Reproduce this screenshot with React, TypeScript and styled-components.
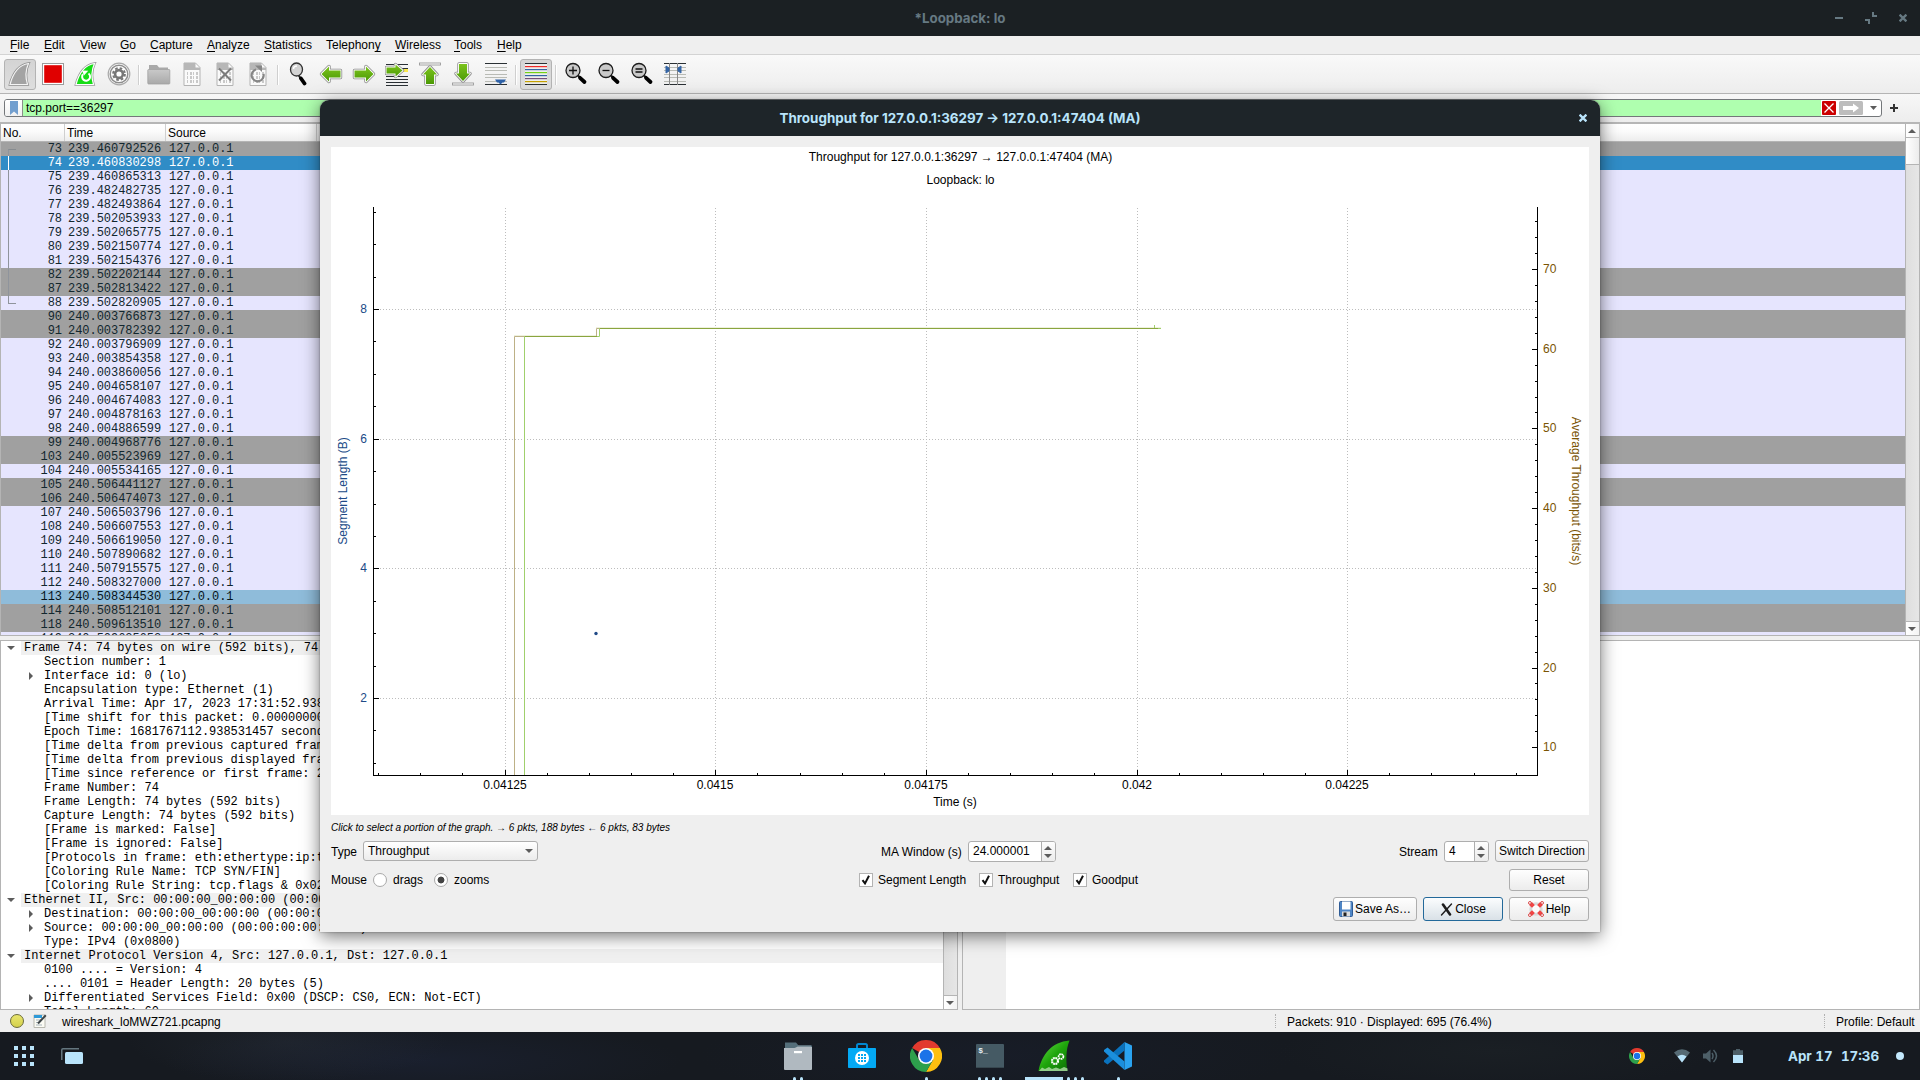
import React from 'react';
import styled, { createGlobalStyle, css } from 'styled-components';

const SANS = '"Liberation Sans", Arial, sans-serif';
const MONO = '"Liberation Mono", "Courier New", monospace';
const INTER = 'Inter, Roboto, sans-serif';

const Global = createGlobalStyle`
  html, body { margin: 0; padding: 0; background: #15191f; overflow: hidden; }
  *, *::before, *::after { box-sizing: border-box; }
  svg { display: block; flex: none; }
`;

const Screen = styled.div`
  position: relative;
  display: flex;
  flex-direction: column;
  width: 1920px;
  height: 1080px;
  overflow: hidden;
  background: #efefef;
  font: 12px/14px ${SANS};
  color: #000;
`;

/* ---------- main window frame ---------- */
const TitleBar = styled.header`
  flex: none;
  display: grid;
  grid-template-columns: 1fr auto 1fr;
  align-items: center;
  height: 36px;
  background: #1b2023;
  color: #667982;
  font: 700 13.33px/16px ${INTER};
`;
const TitleText = styled.span`
  grid-column: 2;
  white-space: pre;
`;
const WindowControls = styled.div`
  justify-self: end;
  display: flex;
  align-items: center;
  gap: 22px;
  padding-right: 13px;
`;

const MenuBar = styled.nav`
  flex: none;
  display: flex;
  height: 19px;
  padding: 2px 0 0 3px;
  border-bottom: 1px solid #d3d3d3;
`;
const MenuItem = styled.span<{ $w: number }>`
  flex: none;
  width: ${(p) => p.$w}px;
  padding-left: 7px;
  white-space: nowrap;
  u { text-underline-offset: 2px; text-decoration-thickness: 1px; }
`;

const ToolBar = styled.div`
  flex: none;
  display: flex;
  align-items: flex-start;
  gap: 1px;
  height: 39px;
  padding: 4px 0 0 4px;
  background: linear-gradient(#f9f9f9, #ededed);
  border-bottom: 1px solid #b4b4b4;
`;
const ToolButton = styled.span<{ $on?: boolean }>`
  flex: none;
  display: flex;
  justify-content: center;
  width: 32px;
  height: 31px;
  padding-top: ${(p) => (p.$on ? 2 : 3)}px;
  border-radius: 3px;
  ${(p) => p.$on && css`
    background: linear-gradient(#d4d4d4, #dedede);
    border: 1px solid #b3b3b3;
  `}
`;
const ToolSep = styled.span`
  width: 6px;
  height: 20px;
  border-left: 1px solid #cfcfcf;
  margin: 6px -2px 0 2px;
  box-shadow: inset 1px 0 #fff;
`;

const FilterBar = styled.div`
  flex: none;
  display: flex;
  align-items: flex-start;
  height: 30px;
  padding: 5px 0 0 4px;
  background: linear-gradient(#f7f7f7, #ededed);
  border-bottom: 2px solid #b6b6b6;
`;
const FilterBox = styled.div`
  display: flex;
  width: 1878px;
  height: 18px;
  border: 1px solid #74777a;
  border-radius: 3px;
  background: #fff;
  overflow: hidden;
`;
const FilterBookmark = styled.span`
  display: flex;
  justify-content: center;
  align-items: center;
  width: 18px;
  border-right: 1px solid #8a8f8a;
  background: linear-gradient(#fff, #f1f1f1);
`;
const FilterText = styled.span`
  flex: 1;
  padding: 0 0 0 3px;
  line-height: 16px;
  background: #afffaf;
`;
const FilterTools = styled.span`
  display: flex;
  align-items: center;
  width: 60px;
  padding-left: 1px;
  gap: 3px;
`;
const FilterAdd = styled.span`
  display: flex;
  align-items: center;
  height: 18px;
  margin-left: 8px;
`;

/* ---------- packet list ---------- */
const PacketPane = styled.section`
  flex: none;
  display: flex;
  height: 512px;
  border: solid #b4b4b4;
  border-width: 0 1px 1px;
`;
const PacketTable = styled.div`
  flex: 1;
  display: flex;
  flex-direction: column;
  overflow: hidden;
`;
const HeaderRow = styled.div`
  flex: none;
  display: flex;
  height: 18px;
  background: linear-gradient(#fff, #fbfbfb 45%, #ededed);
  border-bottom: 1px solid #b4b4b4;
`;
const HeaderCell = styled.span<{ $w: number }>`
  flex: none;
  width: ${(p) => p.$w}px;
  padding: 2px 0 0 2px;
  border-right: 1px solid #cfcfcf;
`;

type Kind = 'gray' | 'tcp' | 'sel' | 'rel';
const rowColors: Record<Kind, [string, string]> = {
  gray: ['#a0a0a0', '#12272e'],
  tcp: ['#e6e5fe', '#12272e'],
  sel: ['#308cc6', '#ffffff'],
  rel: ['#8fbcda', '#06141a'],
};
const PacketRow = styled.div<{ $kind: Kind }>`
  flex: none;
  display: grid;
  grid-template-columns: 15px 46px 101px auto;
  height: 14px;
  font: 12px/14px ${MONO};
  letter-spacing: -0.04px;
  background: ${(p) => rowColors[p.$kind][0]};
  color: ${(p) => rowColors[p.$kind][1]};
`;
const Thread = styled.span<{ $part?: 'start' | 'mid' | 'end'; $light?: boolean }>`
  width: 8px;
  margin-left: 7px;
  ${(p) => p.$part && css`border-left: 1px solid ${p.$light ? '#fff' : '#8f949c'};`}
  ${(p) => p.$part === 'start' && css`height: 7px; margin-top: 7px; border-top: 1px solid #878c90;`}
  ${(p) => p.$part === 'end' && css`height: 8px; border-bottom: 1px solid #8f949c;`}
`;
const NoCell = styled.span`
  text-align: right;
`;
const Cell = styled.span`
  padding-left: 6px;
`;

const ScrollBar = styled.div`
  flex: none;
  display: flex;
  flex-direction: column;
  width: 14px;
  border-left: 1px solid #b4b4b4;
  background: linear-gradient(90deg, #dedede, #e6e6e6);
`;
const ScrollButton = styled.span<{ $bottom?: boolean }>`
  display: flex;
  align-items: center;
  justify-content: center;
  height: 14px;
  padding-right: 1px;
  background: linear-gradient(90deg, #fff, #f3f3f3);
  ${(p) => (p.$bottom ? css`margin-top: auto; border-top: 1px solid #b4b4b4;` : css`border-bottom: 1px solid #b4b4b4;`)}
`;
const ScrollHandle = styled.span`
  height: 27px;
  border-bottom: 1px solid #b4b4b4;
  background: linear-gradient(90deg, #fff, #ececec);
`;

/* ---------- lower panes ---------- */
const LowerPanes = styled.section`
  flex: none;
  display: flex;
  gap: 4px;
  height: 370px;
  margin-top: 4px;
`;
const DetailPane = styled.div`
  display: flex;
  width: 958px;
  border: 1px solid #b4b4b4;
  background: #fff;
`;
const DetailTree = styled.div`
  flex: 1;
  overflow: hidden;
`;
const DetailRow = styled.div<{ $top?: boolean }>`
  display: flex;
  height: 14px;
  font: 12px/14px ${MONO};
  letter-spacing: -0.025px;
  white-space: pre;
  padding-left: ${(p) => (p.$top ? 0 : 20)}px;
`;
const Expander = styled.span`
  flex: none;
  display: flex;
  align-items: center;
  justify-content: center;
  width: 20px;
`;
const DetailText = styled.span<{ $top?: boolean }>`
  flex: 1;
  padding-left: 3px;
  background: ${(p) => (p.$top ? '#f0f0f0' : 'transparent')};
`;
const HexPane = styled.div`
  flex: 1;
  border: 1px solid #b4b4b4;
  background: linear-gradient(90deg, #efefef 43px, #fff 43px);
`;

const StatusBar = styled.footer`
  flex: none;
  display: flex;
  align-items: center;
  height: 22px;
`;
const ExpertDot = styled.span`
  width: 14px;
  height: 14px;
  margin-left: 10px;
  border: 1px solid #6b6b3a;
  border-radius: 50%;
  background: linear-gradient(#e9e66f, #d3d04d);
`;
const StatusFile = styled.span`
  flex: none;
  width: 1213px;
  padding-top: 2px;
  padding-left: 15px;
`;
const StatusGrip = styled.span`
  flex: none;
  width: 1px;
  height: 14px;
  border-left: 1px dotted #b0b0b0;
`;
const StatusCell = styled.span<{ $w?: number }>`
  flex: none;
  padding-top: 2px;
  padding-left: 11px;
  white-space: nowrap;
  ${(p) => p.$w && css`width: ${p.$w}px;`}
`;

/* ---------- dock ---------- */
const Dock = styled.div`
  flex: none;
  display: grid;
  grid-template-columns: 782px auto 1fr;
  height: 48px;
  background:
    radial-gradient(ellipse 160px 40px at 15% 20%, rgba(70, 80, 95, 0.16), transparent),
    radial-gradient(ellipse 260px 40px at 22% 60%, rgba(30, 38, 62, 0.45), transparent),
    radial-gradient(ellipse 300px 50px at 52% 50%, rgba(26, 32, 50, 0.4), transparent),
    radial-gradient(ellipse 220px 40px at 78% 40%, rgba(30, 36, 40, 0.5), transparent),
    #161a20;
`;
const DockLeft = styled.div`
  display: flex;
  align-items: center;
  gap: 27px;
  padding-left: 14px;
`;
const DockApps = styled.div`
  display: flex;
  gap: 32px;
`;
const DockApp = styled.div`
  display: flex;
  flex-direction: column;
  align-items: center;
  width: 32px;
  height: 48px;
  padding-top: 8px;
`;
const Marks = styled.span`
  display: flex;
  gap: 4px;
  height: 3px;
  margin-top: auto;
`;
const Mark = styled.i<{ $w?: number }>`
  width: ${(p) => p.$w ?? 3}px;
  height: 3px;
  flex: none;
  border-radius: ${(p) => (p.$w ? 0 : '1.5px 1.5px 0 0')};
  background: #b9e4fb;
`;
const Tray = styled.div`
  display: flex;
  align-items: center;
  justify-content: flex-end;
  padding-right: 16px;
  color: #b9e4fb;
`;
const TrayItem = styled.span<{ $gap: number }>`
  display: flex;
  margin-right: ${(p) => p.$gap}px;
`;
const Clock = styled.span`
  display: flex;
  justify-content: space-between;
  width: 91px;
  margin: -1px 17px 0 0;
  font: 700 13.33px/16px ${INTER};
  font-variant-numeric: tabular-nums;
  white-space: nowrap;
`;
const TrayDot = styled.span`
  width: 8px;
  height: 8px;
  border-radius: 50%;
  background: #c3e8fc;
`;

/* ---------- dialog ---------- */
const Dialog = styled.div`
  position: absolute;
  left: 320px;
  top: 100px;
  display: flex;
  flex-direction: column;
  width: 1280px;
  height: 832px;
  border-radius: 9px 9px 0 0;
  background: #efefef;
  box-shadow: 0 4px 18px rgba(0, 0, 0, 0.55), 0 0 2px rgba(0, 0, 0, 0.4);
`;
const DialogTitle = styled.div`
  flex: none;
  display: grid;
  grid-template-columns: 1fr auto 1fr;
  align-items: center;
  height: 36px;
  border-radius: 9px 9px 0 0;
  background: #1e2529;
  color: #b9e4fb;
  font: 700 13.4px/16px ${INTER};
`;
const DialogClose = styled.span`
  justify-self: end;
  padding-right: 13px;
`;
const Plot = styled.div`
  flex: none;
  margin: 11px 11px 0;
  width: 1258px;
  height: 668px;
  background: #fff;
`;
const Hint = styled.div`
  height: 25px;
  padding: 6px 11px 0;
  font: italic 10px/14px ${SANS};
`;
const FormRow = styled.div<{ $h: number }>`
  flex: none;
  display: flex;
  align-items: center;
  height: ${(p) => p.$h}px;
  padding: 0 11px;
`;
const Label = styled.span<{ $w: number; $low?: boolean }>`
  flex: none;
  width: ${(p) => p.$w}px;
  padding-top: ${(p) => (p.$low ? 2 : 0)}px;
  white-space: nowrap;
`;
const Spacer = styled.span<{ $w?: number }>`
  ${(p) => (p.$w ? css`flex: none; width: ${p.$w}px;` : css`flex: 1;`)}
`;
const control = css`
  flex: none;
  border: 1px solid #aeaeae;
  border-radius: 3px;
`;
const Combo = styled.span`
  ${control}
  display: flex;
  align-items: center;
  justify-content: space-between;
  width: 175px;
  height: 20px;
  padding: 0 4px 1px 4px;
  background: linear-gradient(#fff, #ececec);
`;
const Spin = styled.span<{ $w: number }>`
  ${control}
  display: flex;
  width: ${(p) => p.$w}px;
  height: 21px;
  margin-top: 1px;
  background: #fff;
  overflow: hidden;
`;
const SpinValue = styled.span`
  flex: 1;
  padding-left: 4px;
  line-height: 19px;
`;
const SpinArrows = styled.span`
  display: flex;
  flex-direction: column;
  align-items: center;
  justify-content: center;
  gap: 4px;
  width: 14px;
  padding-right: 1px;
  border-left: 1px solid #aeaeae;
  background: linear-gradient(#fdfdfd, #ececec);
`;
const Button = styled.span<{ $w: number; $h: number; $primary?: boolean }>`
  ${control}
  display: flex;
  align-items: center;
  justify-content: center;
  gap: 2px;
  width: ${(p) => p.$w}px;
  height: ${(p) => p.$h}px;
  margin-left: 6px;
  white-space: nowrap;
  background: linear-gradient(#fefefe, #ececec);
  ${(p) => p.$primary && css`
    border-color: #23699a;
    background: linear-gradient(#fbfdfe, #d9e1e7);
  `}
`;
const Radio = styled.span<{ $on?: boolean }>`
  flex: none;
  width: 14px;
  height: 14px;
  border: 1px solid #a9a9a9;
  border-radius: 50%;
  background: ${(p) => (p.$on ? 'radial-gradient(circle, #434343 3px, #fff 3.8px)' : '#fff')};
`;
const CheckBox = styled.span`
  flex: none;
  display: flex;
  align-items: center;
  justify-content: center;
  width: 14px;
  height: 14px;
  margin-right: 5px;
  border: 1px solid #b3b3b3;
  background: #fff;
`;

/* ---------- small glyphs ---------- */
const Tri = ({ dir, w = 8, h = 5 }: { dir: 'up' | 'down' | 'right'; w?: number; h?: number }) => (
  <svg width={w} height={h} viewBox={`0 0 ${w} ${h}`} fill="#5c5c5c">
    {dir === 'up' && <path d={`M0 ${h}L${w / 2} 0L${w} ${h}Z`} />}
    {dir === 'down' && <path d={`M0 0H${w}L${w / 2} ${h}Z`} />}
    {dir === 'right' && <path d={`M0 0L${w} ${h / 2}L0 ${h}Z`} />}
  </svg>
);
const Cross = ({ color }: { color: string }) => (
  <svg width="8" height="8" viewBox="0 0 8 8" stroke={color} strokeWidth="2.3">
    <path d="M0.6 0.6L7.4 7.4M7.4 0.6L0.6 7.4" />
  </svg>
);
const Check = () => (
  <svg width="10" height="10" viewBox="0 0 10 10" fill="none" stroke="#111" strokeWidth="2">
    <path d="M1.5 5.2L4 8.4L8 0.8" />
  </svg>
);

/* ---------- toolbar icons, 24 unit grid ---------- */
const Icon = ({ children }: { children: React.ReactNode }) => (
  <svg width="24" height="24" viewBox="0 0 24 24" fill="none">{children}</svg>
);
const FIN = 'M2 22.5C5 11 11 3 20.5 1.5C17.5 8 17.5 16 19.5 22.5Z';
const Arrow = ({ d }: { d: string }) => (
  <g strokeLinejoin="round">
    <path d={d} stroke="#8b8b8b" strokeWidth="3.4" />
    <path d={d} stroke="#fff" strokeWidth="1.8" fill="url(#greenGrad)" />
    <path d={d} fill="url(#greenGrad)" />
  </g>
);
const Lines = ({ ys, color }: { ys: number[]; color: string }) => (
  <g fill={color}>{ys.map((y) => <rect key={y} x="1" y={y} width="22" height="1" />)}</g>
);
const Lens = ({ children }: { children?: React.ReactNode }) => (
  <Icon>
    <path d="M13.5 13L16 15.5" stroke="#222" strokeWidth="2" />
    <path d="M16 15.8L20.5 20" stroke="#000" strokeWidth="3.8" strokeLinecap="round" />
    <circle cx="9" cy="8.5" r="7" fill="#c9c9c9" stroke="#1c1c1c" strokeWidth="1.3" />
    {children}
  </Icon>
);
const FilePage = ({ children }: { children?: React.ReactNode }) => (
  <Icon>
    <path d="M4 1H15.5L20 5.5V23.5H4Z" fill="#fafafa" stroke="#b3b3b3" />
    <path d="M4 1H15.5V5.5H20V8H4Z" fill="#b7b7b7" />
    <g fill="#c9c9c9">
      {[10, 14, 18].map((y) => [7, 10, 13, 16].map((x, i) => (
        <rect key={`${x}-${y}`} x={x} y={y} width={(i + y / 2) % 2 ? 1 : 2} height="3" />
      )))}
    </g>
    {children}
  </Icon>
);

const FinIcon = () => (
  <Icon>
    <path d={FIN} fill="#a8a8a8" stroke="#8f8f8f" strokeWidth="2.6" />
    <path d={FIN} fill="#a3a3a3" stroke="#f4f4f4" strokeWidth="1.2" />
  </Icon>
);
const StopIcon = () => (
  <Icon>
    <rect x="1.5" y="1.5" width="21" height="21" fill="#fff" stroke="#9b9b9b" />
    <rect x="3.2" y="3.2" width="17.6" height="17.6" fill="#e00000" />
  </Icon>
);
const RestartIcon = () => (
  <Icon>
    <path d={FIN} fill="#fff" stroke="#9a9a9a" strokeWidth="2.6" />
    <path d={FIN} fill="#16dc16" stroke="#fff" strokeWidth="1.2" />
    <path d="M9 12.2A4 4 0 1 0 14.5 11.5" stroke="#fff" strokeWidth="2" />
    <path d="M8 8.5L14.2 8.7L10 13.5Z" fill="#fff" />
  </Icon>
);
const OptionsIcon = () => (
  <Icon>
    <circle cx="12" cy="12" r="10.8" fill="#fff" stroke="#a9a9a9" strokeWidth="1.2" />
    <circle cx="12" cy="12" r="8.8" fill="#fff" stroke="#8d8d8d" strokeWidth="1.5" />
    <circle cx="12" cy="12" r="5.9" stroke="#777" strokeWidth="2" strokeDasharray="2.6 2.03" />
    <circle cx="12" cy="12" r="3.9" stroke="#777" strokeWidth="2.6" />
  </Icon>
);
const FolderIcon = () => (
  <Icon>
    <path d="M2 3H10L12 5.5H21V9H2Z" fill="#a9a9a9" />
    <rect x="0.8" y="7.5" width="22" height="14.5" rx="0.8" fill="url(#folderGrad)" stroke="#a2a2a2" strokeWidth="0.8" />
  </Icon>
);
const ToolDefs = () => (
  <defs>
    <linearGradient id="greenGrad" x1="0" y1="0" x2="0" y2="1">
      <stop offset="0" stopColor="#7cc41c" /><stop offset="1" stopColor="#4c9a06" />
    </linearGradient>
    <linearGradient id="folderGrad" x1="0" y1="0" x2="0" y2="1">
      <stop offset="0" stopColor="#c9c9c9" /><stop offset="1" stopColor="#a9a9a9" />
    </linearGradient>
    <linearGradient id="finGrad" x1="0" y1="0" x2="1" y2="1">
      <stop offset="0" stopColor="#6be04a" /><stop offset="0.5" stopColor="#1fa50c" /><stop offset="1" stopColor="#0b6a05" />
    </linearGradient>
  </defs>
);

const tools: ({ icon: React.ReactNode; on?: boolean } | null)[] = [
  { icon: <FinIcon />, on: true },
  { icon: <StopIcon /> },
  { icon: <RestartIcon /> },
  { icon: <OptionsIcon /> },
  null,
  { icon: <FolderIcon /> },
  { icon: <FilePage /> },
  { icon: <FilePage><path d="M6 6.5L18 18.5M18 6.5L6 18.5" stroke="#7c7c7c" strokeWidth="2" /></FilePage> },
  { icon: <FilePage><path d="M10 7.5A6 6 0 1 0 17.5 12" stroke="#868686" strokeWidth="2.2" /><path d="M9 3.5H16V10Z" fill="#868686" /></FilePage> },
  null,
  {
    icon: (
      <Icon>
        <path d="M12.5 13L15 17" stroke="#222" strokeWidth="2" />
        <path d="M15 16.5L18.5 21.5" stroke="#000" strokeWidth="3.8" strokeLinecap="round" />
        <ellipse cx="10.5" cy="7.5" rx="6" ry="6.5" fill="#d3d3d3" stroke="#333" strokeWidth="1.3" />
        <path d="M7.5 7C7.5 5 9 4 11 4" stroke="#fff" strokeWidth="1.5" />
      </Icon>
    ),
  },
  { icon: <Icon><Arrow d="M2.5 12L10 4.5V8.5H21.5V15.5H10V19.5Z" /></Icon> },
  { icon: <Icon><Arrow d="M21.5 12L14 4.5V8.5H2.5V15.5H14V19.5Z" /></Icon> },
  {
    icon: (
      <Icon>
        <Lines ys={[2, 6, 14, 17, 20, 23]} color="#2a3034" />
        <rect x="17" y="7" width="6" height="3" fill="#fce94f" />
        <Arrow d="M17.5 8.5L10.5 2.5V5.5H1.5V11.5H10.5V14.5Z" />
      </Icon>
    ),
  },
  { icon: <Icon><rect x="1.5" y="1" width="21" height="2" fill="#fff" stroke="#9a9a9a" strokeWidth="0.9" /><Arrow d="M12 5L19 12.5H16V22H8V12.5H5Z" /></Icon> },
  { icon: <Icon><Arrow d="M12 19L19 11.5H16V2H8V11.5H5Z" /><rect x="1.5" y="21" width="21" height="2" fill="#fff" stroke="#9a9a9a" strokeWidth="0.9" /></Icon> },
  {
    icon: (
      <Icon>
        <Lines ys={[1, 22]} color="#2a3034" />
        <Lines ys={[5, 8, 12, 15, 19]} color="#b9bbb5" />
        <path d="M11 17.5H22L20 20.5H18.5L16.5 22.5L14.5 20.5H13Z" fill="#2f62a8" />
      </Icon>
    ),
  },
  null,
  {
    on: true,
    icon: (
      <Icon>
        <rect x="1" y="1" width="22" height="22" fill="#eeeeec" />
        <Lines ys={[1, 22]} color="#2a3034" />
        {[['#ef2929', 4], ['#3465a4', 7], ['#73d216', 10], ['#3465a4', 13], ['#75507b', 16], ['#c4a000', 19]].map(([c, y]) => (
          <rect key={y} x="1" y={y} width="22" height="1.2" fill={c as string} />
        ))}
      </Icon>
    ),
  },
  null,
  { icon: <Lens><path d="M5 8.5H13M9 4.5V12.5" stroke="#111" strokeWidth="1.3" /></Lens> },
  { icon: <Lens><path d="M5.5 8.5H12.5" stroke="#111" strokeWidth="1.3" /></Lens> },
  { icon: <Lens><path d="M5.5 7H12.5M5.5 10H12.5" stroke="#111" strokeWidth="1.3" /></Lens> },
  {
    icon: (
      <Icon>
        <Lines ys={[1, 22]} color="#2a3034" />
        <Lines ys={[5, 8, 12, 15, 19]} color="#b9bbb5" />
        <path d="M6.5 1V23M14.5 1V23" stroke="#888" />
        <path d="M3 4L6 6V9L3 11ZM18 4L15 6V9L18 11Z" fill="#3465a4" stroke="#3465a4" />
      </Icon>
    ),
  },
];

/* ---------- dock icons, drawn in 32px ---------- */
const Chrome = ({ size }: { size: number }) => (
  <svg width={size} height={size} viewBox="0 0 32 32">
    <path d="M16 16L2.14 8A16 16 0 0 1 29.86 8Z" fill="#e23a2e" />
    <path d="M16 8H29.86A16 16 0 0 1 16 32L22.93 20Z" fill="#fdbf10" />
    <path d="M2.14 8L9.07 20L16 24L22.93 20L16 32A16 16 0 0 1 2.14 8Z" fill="#2da04c" />
    <circle cx="16" cy="16" r="8" fill="#fff" />
    <circle cx="16" cy="16" r="6.4" fill="#1b73e8" />
  </svg>
);
const FilesIcon = () => (
  <svg width="32" height="32" viewBox="0 0 32 32">
    <path d="M3 2.5H14L16.5 5.5H30V12H3Z" fill="#546e7a" />
    <path d="M16 5.5H29V9H13Z" fill="#7b8f99" />
    <path d="M2 8H12.5L15 7H30V29Q30 30 29 30H3Q2 30 2 29Z" fill="#b0b9c0" />
    <rect x="12" y="11" width="8" height="2.2" fill="#fff" />
  </svg>
);
const StoreIcon = () => (
  <svg width="32" height="32" viewBox="0 0 32 32">
    <path d="M11 9V5.5Q11 4 12.5 4H19.5Q21 4 21 5.5V9" stroke="#0288d1" strokeWidth="2" fill="none" />
    <rect x="2" y="8" width="28" height="20" rx="0.8" fill="#03a9f4" />
    <circle cx="16" cy="18" r="7" fill="#fff" />
    <g fill="#03a9f4">
      {[12, 15, 18].map((x) => [14, 17, 20].map((y) => <rect key={`${x}${y}`} x={x} y={y} width="2" height="2" />))}
    </g>
  </svg>
);
const TermText = styled.text`
  font: 700 8px ${MONO};
  fill: #e6eef2;
`;
const TerminalIcon = () => (
  <svg width="32" height="32" viewBox="0 0 32 32">
    <rect x="2" y="4" width="28" height="24" rx="1" fill="#455a64" />
    <rect x="2" y="27" width="28" height="1" fill="#37474f" />
    <TermText x="4.3" y="13">$_</TermText>
  </svg>
);
const SharkIcon = () => (
  <svg width="32" height="32" viewBox="0 0 32 32">
    <path d="M0.5 31C4 14 14 2 31.5 0.5C27.5 10 28 22 29.5 31Z" fill="url(#finGrad)" />
    <path d="M1 31L4 27.5L7 29L11 27L14 29L18 27.5L22 29L26 27L29.5 28.5V31Z" fill="#a9d9a0" opacity="0.85" />
    <circle cx="17" cy="21" r="3" fill="none" stroke="#fff" strokeWidth="2.2" strokeDasharray="1.8 0.55" />
    <circle cx="23" cy="16.5" r="2.4" fill="none" stroke="#fff" strokeWidth="1.8" strokeDasharray="1.6 0.5" />
  </svg>
);
const CodeIcon = () => (
  <svg width="32" height="32" viewBox="0 0 32 32">
    <path d="M22.5 2L30 5.5V26.5L22.5 30Z" fill="#2aa3f0" />
    <path d="M22.5 2V10.5L5.5 24.5L2 22V20.5Z" fill="#0a72bd" />
    <path d="M22.5 30V21.5L5.5 7.5L2 10V11.5Z" fill="#1b8fdd" />
  </svg>
);

/* ---------- packet data ---------- */
const grays = [73, 82, 87, 90, 91, 99, 103, 105, 106, 114, 118];
const packets: [number, string][] = [
  [73, '239.460792526'], [74, '239.460830298'], [75, '239.460865313'], [76, '239.482482735'],
  [77, '239.482493864'], [78, '239.502053933'], [79, '239.502065775'], [80, '239.502150774'],
  [81, '239.502154376'], [82, '239.502202144'], [87, '239.502813422'], [88, '239.502820905'],
  [90, '240.003766873'], [91, '240.003782392'], [92, '240.003796909'], [93, '240.003854358'],
  [94, '240.003860056'], [95, '240.004658107'], [96, '240.004674083'], [97, '240.004878163'],
  [98, '240.004886599'], [99, '240.004968776'], [103, '240.005523969'], [104, '240.005534165'],
  [105, '240.506441127'], [106, '240.506474073'], [107, '240.506503796'], [108, '240.506607553'],
  [109, '240.506619050'], [110, '240.507890682'], [111, '240.507915575'], [112, '240.508327000'],
  [113, '240.508344530'], [114, '240.508512101'], [118, '240.509613510'], [119, '240.509625652'],
];
const kindOf = (no: number): Kind =>
  no === 74 ? 'sel' : no === 113 ? 'rel' : grays.includes(no) ? 'gray' : 'tcp';
const partOf = (no: number) =>
  no === 73 ? 'start' : no === 88 ? 'end' : no < 88 ? 'mid' : undefined;

/* level 0 rows are protocol headings; '+' marks a collapsed child */
const details: [number, string, string][] = [
  [0, '-', 'Frame 74: 74 bytes on wire (592 bits), 74 bytes'],
  [1, '', 'Section number: 1'],
  [1, '+', 'Interface id: 0 (lo)'],
  [1, '', 'Encapsulation type: Ethernet (1)'],
  [1, '', 'Arrival Time: Apr 17, 2023 17:31:52.938531457'],
  [1, '', '[Time shift for this packet: 0.000000000 seconds]'],
  [1, '', 'Epoch Time: 1681767112.938531457 seconds'],
  [1, '', '[Time delta from previous captured frame:'],
  [1, '', '[Time delta from previous displayed frame:'],
  [1, '', '[Time since reference or first frame: 239'],
  [1, '', 'Frame Number: 74'],
  [1, '', 'Frame Length: 74 bytes (592 bits)'],
  [1, '', 'Capture Length: 74 bytes (592 bits)'],
  [1, '', '[Frame is marked: False]'],
  [1, '', '[Frame is ignored: False]'],
  [1, '', '[Protocols in frame: eth:ethertype:ip:tcp]'],
  [1, '', '[Coloring Rule Name: TCP SYN/FIN]'],
  [1, '', '[Coloring Rule String: tcp.flags & 0x02]'],
  [0, '-', 'Ethernet II, Src: 00:00:00_00:00:00 (00:00:00)'],
  [1, '+', 'Destination: 00:00:00_00:00:00 (00:00:00:00:00:00)'],
  [1, '+', 'Source: 00:00:00_00:00:00 (00:00:00:00:00:00)'],
  [1, '', 'Type: IPv4 (0x0800)'],
  [0, '-', 'Internet Protocol Version 4, Src: 127.0.0.1, Dst: 127.0.0.1'],
  [1, '', '0100 .... = Version: 4'],
  [1, '', '.... 0101 = Header Length: 20 bytes (5)'],
  [1, '+', 'Differentiated Services Field: 0x00 (DSCP: CS0, ECN: Not-ECT)'],
  [1, '', 'Total Length: 60'],
];

const menus: [string, string, string, number][] = [
  ['', 'F', 'ile', 34], ['', 'E', 'dit', 36], ['', 'V', 'iew', 40], ['', 'G', 'o', 30],
  ['', 'C', 'apture', 57], ['', 'A', 'nalyze', 57], ['', 'S', 'tatistics', 62], ['Telephon', 'y', '', 69],
  ['', 'W', 'ireless', 59], ['', 'T', 'ools', 43], ['', 'H', 'elp', 40],
];

/* ---------- chart ---------- */
const ChartText = styled.text<{ $fill?: string; $anchor?: string }>`
  font: 12px ${SANS};
  fill: ${(p) => p.$fill ?? '#000'};
  text-anchor: ${(p) => p.$anchor ?? 'middle'};
`;
const BLUE = '#204a87';
const BROWN = '#7a5403';
const range = (n: number, from = 0) => Array.from({ length: n }, (_, i) => i + from);

const Chart = () => {
  const xMajor = ['0.04125', '0.0415', '0.04175', '0.042', '0.04225'].map((t, i) => ({ t, x: Math.floor(505.1 + i * 210.65) }));
  const yLeft = [8, 6, 4, 2].map((t, i) => ({ t, y: Math.round(309 + i * 129.67) }));
  const yRight = [70, 60, 50, 40, 30, 20, 10].map((t, i) => ({ t, y: Math.round(269 + i * 79.7) }));
  const yMinor = range(18, -3).map((i) => Math.round(309 + i * 32.417));
  const rMinor = range(34, -3).map((i) => Math.round(269 + i * 15.94)).filter((y) => y < 775);
  const xMinor = range(28, -3).map((i) => Math.floor(505.1 + i * 42.13));
  return (
    <svg width="1258" height="668" viewBox="331 147 1258 668">
      <ChartText x="960.5" y="161">Throughput for 127.0.0.1:36297 → 127.0.0.1:47404 (MA)</ChartText>
      <ChartText x="960.5" y="184">Loopback: lo</ChartText>
      <g stroke="#bdbdbd" strokeDasharray="1 2">
        {xMajor.map(({ x }) => <path key={x} d={`M${x + 0.5} 208V775`} />)}
        {yLeft.map(({ y }) => <path key={y} d={`M374 ${y + 0.5}H1537`} />)}
      </g>
      <g fill="none" strokeWidth="1">
        <path d="M514 335.5H596M596 327.5H1161" stroke="#eef1de" />
        <path d="M514.5 775V336.5H596.5V328.5H1161" stroke="#bdb186" />
        <path d="M524.5 775V336.5H599.5V328.5H1161" stroke="#a0d06c" />
        <path d="M525 336.5H597M600 328.5H1158" stroke="#8aa53f" />
        <path d="M1154.5 328V325" stroke="#a0d06c" />
      </g>
      <circle cx="596" cy="633.5" r="1.7" fill={BLUE} />
      <g stroke="#000">
        <path d="M373.5 207V776M1537.5 207V776M373 775.5H1538" />
        {xMajor.map(({ x }) => <path key={x} d={`M${x + 0.5} 770V775`} />)}
        {xMinor.map((x) => <path key={x} d={`M${x + 0.5} 773V775`} />)}
        {yLeft.map(({ y }) => <path key={y} d={`M374 ${y + 0.5}H379`} />)}
        {yMinor.map((y) => <path key={y} d={`M374 ${y + 0.5}H376`} />)}
        {yRight.map(({ y }) => <path key={y} d={`M1532 ${y + 0.5}H1537`} />)}
        {rMinor.map((y) => <path key={y} d={`M1535 ${y + 0.5}H1537`} />)}
      </g>
      {xMajor.map(({ t, x }) => <ChartText key={t} x={x} y="789">{t}</ChartText>)}
      {yLeft.map(({ t, y }) => <ChartText key={t} x="367" y={y + 4} $fill={BLUE} $anchor="end">{t}</ChartText>)}
      {yRight.map(({ t, y }) => <ChartText key={t} x="1543" y={y + 4} $fill={BROWN} $anchor="start">{t}</ChartText>)}
      <ChartText x="955" y="806">Time (s)</ChartText>
      <ChartText transform="translate(347 491) rotate(-90)" $fill={BLUE}>Segment Length (B)</ChartText>
      <ChartText transform="translate(1572 491) rotate(90)" $fill={BROWN}>Average Throughput (bits/s)</ChartText>
    </svg>
  );
};

const Arrows = () => (
  <SpinArrows><Tri dir="up" w={8} h={4} /><Tri dir="down" w={8} h={4} /></SpinArrows>
);

const ThroughputDialog = () => (
  <Dialog>
    <DialogTitle>
      <TitleText>Throughput for 127.0.0.1:36297 → 127.0.0.1:47404 (MA)</TitleText>
      <DialogClose><Cross color="#b9e4fb" /></DialogClose>
    </DialogTitle>
    <Plot><Chart /></Plot>
    <Hint>Click to select a portion of the graph. → 6 pkts, 188 bytes ← 6 pkts, 83 bytes</Hint>
    <FormRow $h={22}>
      <Label $w={32} $low>Type</Label>
      <Combo>Throughput<Tri dir="down" w={8} h={4} /></Combo>
      <Spacer $w={343} />
      <Label $w={87} $low>MA Window (s)</Label>
      <Spin $w={88}><SpinValue>24.000001</SpinValue><Arrows /></Spin>
      <Spacer />
      <Label $w={45} $low>Stream</Label>
      <Spin $w={45}><SpinValue>4</SpinValue><Arrows /></Spin>
      <Button $w={94} $h={22}>Switch Direction</Button>
    </FormRow>
    <FormRow $h={36}>
      <Label $w={42}>Mouse</Label>
      <Radio /><Spacer $w={6} /><Label $w={41}>drags</Label>
      <Radio $on /><Spacer $w={6} /><Label $w={405}>zooms</Label>
      <CheckBox><Check /></CheckBox><Label $w={101}>Segment Length</Label>
      <CheckBox><Check /></CheckBox><Label $w={75}>Throughput</Label>
      <CheckBox><Check /></CheckBox><Label $w={60}>Goodput</Label>
      <Spacer />
      <Button $w={80} $h={22}>Reset</Button>
    </FormRow>
    <FormRow $h={22}>
      <Spacer />
      <Button $w={84} $h={24}>
        <svg width="14" height="16" viewBox="0 0 14 16">
          <rect x="0.5" y="0.5" width="13" height="15" rx="1" fill="#4f86c6" stroke="#2f5c96" />
          <rect x="3" y="0.5" width="8.5" height="8" fill="#fff" />
          <rect x="3" y="10.5" width="8" height="5" fill="#ddd" />
          <rect x="4.5" y="11.5" width="3" height="3.5" fill="#222" />
        </svg>
        Save As…
      </Button>
      <Button $w={80} $h={24} $primary>
        <svg width="13" height="13" viewBox="0 0 13 13" fill="none" stroke="#1d1d1d" strokeLinecap="round">
          <path d="M3 1.5L10 11.5" strokeWidth="2.6" />
          <path d="M11.5 1L1.5 12" strokeWidth="1.4" />
        </svg>
        Close
      </Button>
      <Button $w={80} $h={24}>
        <svg width="16" height="16" viewBox="0 0 16 16" fill="none">
          <circle cx="8" cy="8" r="5.5" fill="#fff" />
          <circle cx="8" cy="8" r="5.2" stroke="#d9d9d9" strokeWidth="3" />
          <circle cx="8" cy="8" r="2.6" fill="#fbfbfb" />
          <path d="M2.5 2.5L5.4 5.4M13.5 2.5L10.6 5.4M2.5 13.5L5.4 10.6M13.5 13.5L10.6 10.6" stroke="#f04545" strokeWidth="4" />
          <g fill="#fff" stroke="#d23030" strokeWidth="0.9">
            <circle cx="1.9" cy="1.9" r="1.4" /><circle cx="14.1" cy="1.9" r="1.4" />
            <circle cx="1.9" cy="14.1" r="1.4" /><circle cx="14.1" cy="14.1" r="1.4" />
          </g>
        </svg>
        Help
      </Button>
    </FormRow>
  </Dialog>
);

export default function App() {
  return (
    <Screen>
      <Global />
      <TitleBar>
        <TitleText>*Loopback: lo</TitleText>
        <WindowControls>
          <svg width="8" height="2" viewBox="0 0 8 2"><rect width="8" height="2" fill="#667982" /></svg>
          <svg width="12" height="12" viewBox="0 0 12 12" fill="none" stroke="#667982" strokeWidth="2">
            <path d="M8 0V4H12M0 8H4V12" />
          </svg>
          <Cross color="#667982" />
        </WindowControls>
      </TitleBar>
      <MenuBar>
        {menus.map(([pre, key, post, w]) => (
          <MenuItem key={pre + key + post} $w={w}>{pre}<u>{key}</u>{post}</MenuItem>
        ))}
      </MenuBar>
      <ToolBar>
        {tools.map((t, i) => (t ? <ToolButton key={i} $on={t.on}>{t.icon}</ToolButton> : <ToolSep key={i} />))}
        <svg width="0" height="0"><ToolDefs /></svg>
      </ToolBar>
      <FilterBar>
        <FilterBox>
          <FilterBookmark>
            <svg width="8" height="14" viewBox="0 0 8 14"><path d="M0 0H8V14L4 10.5L0 14Z" fill="#729fcf" /></svg>
          </FilterBookmark>
          <FilterText>tcp.port==36297</FilterText>
          <FilterTools>
            <svg width="14" height="14" viewBox="0 0 14 14">
              <rect width="14" height="14" rx="1" fill="#cc0000" />
              <path d="M2.5 2.5L11.5 11.5M11.5 2.5L2.5 11.5" stroke="#fff" strokeWidth="1.3" />
            </svg>
            <svg width="24" height="14" viewBox="0 0 24 14">
              <rect width="24" height="14" rx="1.5" fill="#bdbdbd" />
              <path d="M4 5H14V2.5L20 7L14 11.5V9H4Z" fill="#fff" />
            </svg>
            <Spacer $w={1} />
            <Tri dir="down" w={7} h={4} />
          </FilterTools>
        </FilterBox>
        <FilterAdd>
          <svg width="8" height="8" viewBox="0 0 8 8"><path d="M4 0V8M0 4H8" stroke="#333" strokeWidth="2" /></svg>
        </FilterAdd>
      </FilterBar>

      <PacketPane>
        <PacketTable>
          <HeaderRow>
            <HeaderCell $w={64}>No.</HeaderCell>
            <HeaderCell $w={101}>Time</HeaderCell>
            <HeaderCell $w={151}>Source</HeaderCell>
          </HeaderRow>
          {packets.map(([no, time]) => (
            <PacketRow key={no} $kind={kindOf(no)}>
              <Thread $part={partOf(no)} $light={no === 74} />
              <NoCell>{no}</NoCell>
              <Cell>{time}</Cell>
              <Cell>127.0.0.1</Cell>
            </PacketRow>
          ))}
        </PacketTable>
        <ScrollBar>
          <ScrollButton><Tri dir="up" w={8} h={4} /></ScrollButton>
          <ScrollHandle />
          <ScrollButton $bottom><Tri dir="down" w={8} h={4} /></ScrollButton>
        </ScrollBar>
      </PacketPane>

      <LowerPanes>
        <DetailPane>
          <DetailTree>
            {details.map(([level, mark, text], i) => (
              <DetailRow key={i} $top={level === 0}>
                <Expander>
                  {mark === '-' && <Tri dir="down" w={8} h={4} />}
                  {mark === '+' && <Tri dir="right" w={4} h={8} />}
                </Expander>
                <DetailText $top={level === 0}>{text}</DetailText>
              </DetailRow>
            ))}
          </DetailTree>
          <ScrollBar>
            <ScrollButton><Tri dir="up" w={8} h={4} /></ScrollButton>
            <ScrollButton $bottom><Tri dir="down" w={8} h={4} /></ScrollButton>
          </ScrollBar>
        </DetailPane>
        <HexPane />
      </LowerPanes>

      <StatusBar>
        <ExpertDot />
        <Spacer $w={9} />
        <svg width="14" height="14" viewBox="0 0 14 14">
          <path d="M1 1H12V13.5H1Z" fill="#fbfbf4" stroke="#b8b8b0" />
          <rect x="1" y="1" width="8" height="3" fill="#2f9ad8" />
          <path d="M3 6H8M3 8.5H7M3 11H9" stroke="#a8b4bd" />
          <path d="M5 9.5L12.8 1.2" stroke="#3d4447" strokeWidth="2" />
        </svg>
        <StatusFile>wireshark_loMWZ721.pcapng</StatusFile>
        <Spacer $w={15} />
        <StatusGrip />
        <StatusCell $w={548}>Packets: 910 · Displayed: 695 (76.4%)</StatusCell>
        <StatusGrip />
        <StatusCell>Profile: Default</StatusCell>
      </StatusBar>

      <Dock>
        <DockLeft>
          <svg width="20" height="20" viewBox="0 0 20 20" fill="#b9e4fb">
            {[0, 8, 16].map((x) => [0, 8, 16].map((y) => <rect key={`${x}-${y}`} x={x} y={y} width="4" height="4" />))}
          </svg>
          <svg width="22" height="16" viewBox="0 0 22 16">
            <path d="M0.75 12V2Q0.75 0.75 2 0.75H18" fill="none" stroke="#64767f" strokeWidth="1.5" />
            <rect x="4" y="4" width="18" height="12" rx="1.5" fill="#b9e4fb" />
          </svg>
        </DockLeft>
        <DockApps>
          <DockApp><FilesIcon /><Marks><Mark /><Mark /></Marks></DockApp>
          <DockApp><StoreIcon /></DockApp>
          <DockApp><Chrome size={32} /><Marks><Mark /></Marks></DockApp>
          <DockApp><TerminalIcon /><Marks><Mark /><Mark /><Mark /><Mark /></Marks></DockApp>
          <DockApp><SharkIcon /><Marks><Mark $w={38} /><Mark /><Mark /><Mark /></Marks></DockApp>
          <DockApp><CodeIcon /><Marks><Mark /></Marks></DockApp>
        </DockApps>
        <Tray>
          <TrayItem $gap={29}><Chrome size={16} /></TrayItem>
          <TrayItem $gap={13}>
            <svg width="16" height="14" viewBox="0 0 16 14">
              <path d="M0 3.5Q8 -3 16 3.5L8 13.5Z" fill="#566b75" />
              <path d="M3.5 7.5Q8 4 12.5 7.5L8 13.5Z" fill="#b9e4fb" />
            </svg>
          </TrayItem>
          <TrayItem $gap={15}>
            <svg width="15" height="14" viewBox="0 0 15 14">
              <path d="M0 4.5H3L7.5 0.5V13.5L3 9.5H0Z" fill="#4d5f68" />
              <path d="M9 4Q11 7 9 10M10.5 1Q16.5 7 10.5 13" fill="none" stroke="#4d5f68" strokeWidth="1.5" />
            </svg>
          </TrayItem>
          <TrayItem $gap={45}>
            <svg width="10" height="14" viewBox="0 0 10 14">
              <path d="M0 1.2H3V0H7V1.2H10V6H0Z" fill="#4d5f68" />
              <rect y="6" width="10" height="8" fill="#b9e4fb" />
            </svg>
          </TrayItem>
          <Clock><span>Apr 17</span><span>17:36</span></Clock>
          <TrayDot />
        </Tray>
      </Dock>

      <ThroughputDialog />
    </Screen>
  );
}
